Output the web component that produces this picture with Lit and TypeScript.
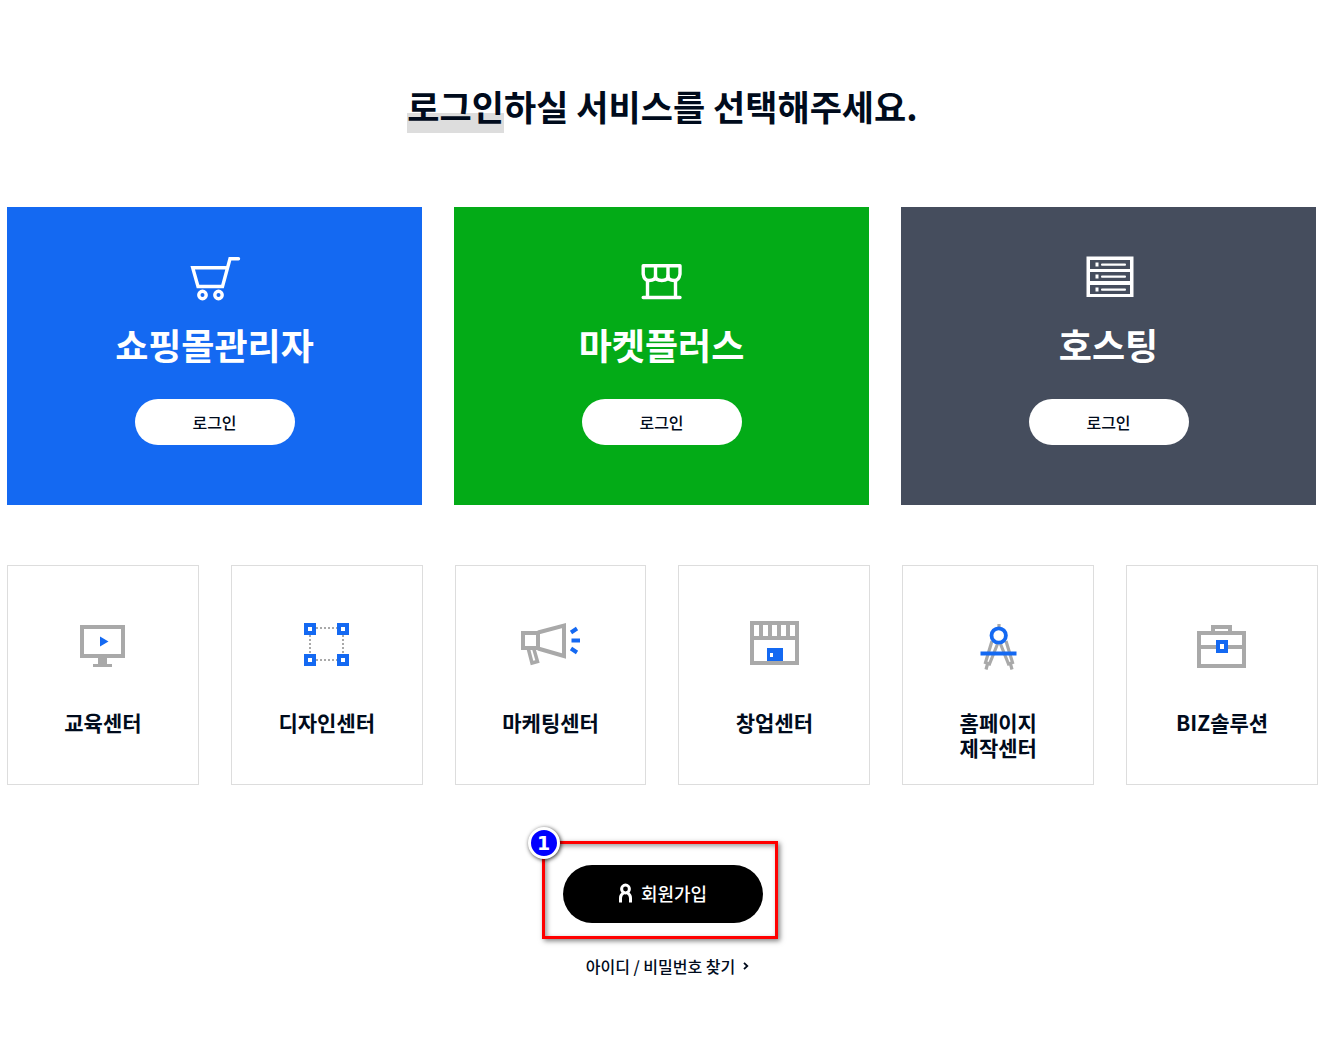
import { LitElement, html, css, svg, type TemplateResult } from "lit";
import { customElement } from "lit/decorators.js";

interface Service {
  name: string;
  tone: string;
  icon: TemplateResult;
}

interface Center {
  lines: string[];
  icon: TemplateResult;
}

const cartIcon = html`<svg class="service-icon" viewBox="-1 0 71 65" aria-hidden="true">
  <g fill="none" stroke="#fff" stroke-width="3.400">
    <path d="M45.500 22.800H12.700L18 41.500H42.500L50 13.700H58.500" stroke-linecap="round" />
    <circle cx="22.500" cy="50" r="3.700" />
    <circle cx="38.500" cy="50" r="3.700" />
  </g>
</svg>`;

const storeIcon = html`<svg class="service-icon" viewBox="-4 -5 71 65" aria-hidden="true">
  <g fill="none" stroke="#fff" stroke-width="3.400" stroke-linecap="round" stroke-linejoin="round">
    <path d="M13.200 15.800H50V24Q49 30.500 44.300 30.500Q38 30.500 38 26Q38 30.500 31.800 30.500Q25.500 30.500 25.500 26Q25.500 30.500 19 30.500Q14 30.500 13.200 24Z" />
    <path d="M25.500 16V26M38 16V26M17.500 31V47M45.500 31V47M13.200 47.500H50" />
  </g>
</svg>`;

const serverIcon = html`<svg class="service-icon" viewBox="-2 0 71 65" aria-hidden="true">
  <rect x="11.500" y="11.500" width="47" height="40.500" fill="#fff" />
  ${[15, 27, 40].map(
    (y) => svg`<g>
      <rect x="15" y=${y} width="40" height="9" fill="#454d5d" />
      <rect x="20.500" y=${y + 2.5} width="3" height="4" fill="#fff" />
      <rect x="26" y=${y + 3.4} width="25" height="2.400" rx="1" fill="#fff" />
    </g>`,
  )}
</svg>`;

const monitorIcon = html`<svg class="center-icon" viewBox="-7 0 80 70" aria-hidden="true">
  <rect x="12" y="17" width="41" height="29" fill="none" stroke="#a9a9a9" stroke-width="4" />
  <path d="M28 48h9v6h5v3H23v-3h5z" fill="#a9a9a9" />
  <path d="M30 26.500V36.500L38.500 31.500Z" fill="#1469f2" />
</svg>`;

const designIcon = html`<svg class="center-icon" viewBox="-3 0 80 70" aria-hidden="true">
  <path d="M26 18H47M26 50H47M20 25V44M53 25V44" fill="none" stroke="#a9a9a9" stroke-width="2" stroke-dasharray="2 2" />
  <g fill="none" stroke="#1469f2" stroke-width="4">
    <rect x="16" y="15" width="8" height="8" />
    <rect x="49" y="15" width="8" height="8" />
    <rect x="16" y="46" width="8" height="8" />
    <rect x="49" y="46" width="8" height="8" />
  </g>
</svg>`;

const megaphoneIcon = html`<svg class="center-icon" viewBox="1 0 80 70" aria-hidden="true">
  <g fill="none" stroke="#a9a9a9" stroke-width="4">
    <rect x="13" y="23" width="15" height="15" />
    <path d="M28 22.500L54 15.500V46L28 38.500" />
    <path d="M18.500 39.500L22 53L27.500 51.500L24 39.500" stroke-width="3.500" />
  </g>
  <path d="M61 22.500L67 18.500M61.500 30.500H70M61 38.500L67 42.500" fill="none" stroke="#1469f2" stroke-width="4" />
</svg>`;

const startupIcon = html`<svg class="center-icon" viewBox="-6 0 80 70" aria-hidden="true">
  <g fill="none" stroke="#a9a9a9" stroke-width="4">
    <rect x="12" y="13" width="45" height="40" />
    <path d="M12 28H57M21 13V28M30 13V28M39 13V28M48 13V28" />
  </g>
  <rect x="27" y="38" width="16" height="13" fill="#1469f2" />
  <rect x="30" y="43" width="3" height="4" fill="#fff" />
</svg>`;

const compassIcon = html`<svg class="center-icon" viewBox="-7 0 80 70" aria-hidden="true">
  <g fill="none" stroke="#a9a9a9" stroke-width="3.200">
    <path d="M34 14V18" />
    <path d="M27 31L20.500 52.500L24.500 54L32.500 34M22.500 54L21 59.500M41 31L47.500 52.500L43.500 54L35.500 34M45.500 54L47 59.500" />
  </g>
  <circle cx="33.700" cy="25.500" r="7.200" fill="#fff" stroke="#1469f2" stroke-width="3.800" />
  <rect x="15.500" y="41.500" width="36" height="4" fill="#1469f2" />
</svg>`;

const briefcaseIcon = html`<svg class="center-icon" viewBox="-3 0 80 70" aria-hidden="true">
  <g fill="none" stroke="#a9a9a9" stroke-width="4">
    <rect x="14" y="23" width="45" height="33" />
    <path d="M28 22V17H45V22M14 37H59" />
  </g>
  <rect x="33" y="32" width="8" height="9" fill="#fff" stroke="#1469f2" stroke-width="4" />
</svg>`;

const services: Service[] = [
  { name: "쇼핑몰관리자", tone: "blue", icon: cartIcon },
  { name: "마켓플러스", tone: "green", icon: storeIcon },
  { name: "호스팅", tone: "slate", icon: serverIcon },
];

const centers: Center[] = [
  { lines: ["교육센터"], icon: monitorIcon },
  { lines: ["디자인센터"], icon: designIcon },
  { lines: ["마케팅센터"], icon: megaphoneIcon },
  { lines: ["창업센터"], icon: startupIcon },
  { lines: ["홈페이지", "제작센터"], icon: compassIcon },
  { lines: ["BIZ솔루션"], icon: briefcaseIcon },
];

@customElement("app-root")
export class AppRoot extends LitElement {
  static styles = css`
    :host {
      display: block;
      background: #fff;
      color: #000b1c;
      font-family: "Noto Sans CJK KR", sans-serif;
    }
    .page {
      display: flex;
      flex-direction: column;
      padding: 79px 7px 60px;
    }
    .title {
      margin: 0;
      text-align: center;
      font-size: 35px;
      line-height: 54px;
      font-weight: 700;
    }
    .mark {
      display: inline-block;
      background: linear-gradient(#ddd, #ddd) 0 100% / 100% 20px no-repeat;
    }
    .services {
      display: grid;
      grid-template-columns: repeat(3, 1fr);
      gap: 32px;
      margin-top: 74px;
      padding-right: 2px;
    }
    .service {
      display: flex;
      flex-direction: column;
      align-items: center;
      padding: 38px 0 60px;
      color: #fff;
    }
    .blue {
      background: #1469f2;
    }
    .green {
      background: #03ab17;
    }
    .slate {
      background: #454d5d;
    }
    .service-icon {
      display: block;
      width: 71px;
      height: 65px;
    }
    .service-name {
      margin: 8px 0 28px;
      font-size: 36px;
      line-height: 53px;
      font-weight: 700;
    }
    .login {
      width: 160px;
      height: 46px;
      padding: 0;
      border: 0;
      border-radius: 23px;
      background: #fff;
      color: #000b1c;
      font-family: inherit;
      font-size: 16px;
      line-height: 24px;
      font-weight: 500;
      cursor: pointer;
    }
    .centers {
      display: grid;
      grid-template-columns: repeat(6, 1fr);
      gap: 32px;
      margin-top: 60px;
    }
    .center {
      box-sizing: border-box;
      display: flex;
      flex-direction: column;
      align-items: center;
      gap: 30px;
      min-height: 220px;
      padding: 44px 0 22px;
      border: 1px solid #ddd;
      color: inherit;
      text-decoration: none;
    }
    .center-icon {
      display: block;
      width: 80px;
      height: 70px;
    }
    .center-name {
      text-align: center;
      font-size: 21px;
      line-height: 25px;
      font-weight: 700;
    }
    .line {
      display: block;
    }
    .join-area {
      position: relative;
      align-self: center;
      margin-top: 80px;
    }
    .join {
      display: flex;
      align-items: center;
      justify-content: center;
      gap: 8px;
      width: 200px;
      height: 58px;
      padding: 0 0 2px;
      border: 0;
      border-radius: 29px;
      background: #000;
      color: #fff;
      font-family: inherit;
      font-size: 18px;
      line-height: 26px;
      font-weight: 500;
      cursor: pointer;
    }
    .join-icon {
      width: 15px;
      height: 20px;
    }
    .callout {
      position: absolute;
      inset: -24px -15px -16px -21px;
      border: 3px solid #f00;
      box-shadow: 2px 2px 5px rgba(0, 0, 0, 0.5), inset 2px 2px 5px rgba(0, 0, 0, 0.4);
      pointer-events: none;
    }
    .badge {
      position: absolute;
      top: -17px;
      left: -17px;
      box-sizing: border-box;
      width: 32px;
      height: 32px;
      border: 3px solid #fff;
      border-radius: 50%;
      background: #00f;
      box-shadow: 1px 1px 4px rgba(0, 0, 0, 0.8);
      color: #fff;
      text-align: center;
      font-family: "DejaVu Sans", sans-serif;
      font-size: 19px;
      line-height: 26px;
      font-weight: 700;
    }
    .find {
      display: flex;
      align-items: center;
      align-self: center;
      gap: 8px;
      margin-top: 31px;
      padding-left: 10px;
      color: inherit;
      font-size: 16px;
      line-height: 24px;
      font-weight: 500;
      text-decoration: none;
    }
    .find-icon {
      width: 6px;
      height: 8px;
    }
  `;

  render() {
    return html`
      <main class="page">
        <h1 class="title"><span class="mark">로그인</span>하실 서비스를 선택해주세요.</h1>
        <section class="services">
          ${services.map(
            (s) => html`<article class="service ${s.tone}">
              ${s.icon}
              <h2 class="service-name">${s.name}</h2>
              <button class="login" type="button">로그인</button>
            </article>`,
          )}
        </section>
        <nav class="centers">
          ${centers.map(
            (c) => html`<a class="center" href="#">
              ${c.icon}
              <span class="center-name">${c.lines.map((l) => html`<span class="line">${l}</span>`)}</span>
            </a>`,
          )}
        </nav>
        <div class="join-area">
          <button class="join" type="button">
            <svg class="join-icon" viewBox="-1 -1 15 20" aria-hidden="true">
              <g fill="none" stroke="#fff" stroke-width="3">
                <circle cx="6.500" cy="5" r="3.900" />
                <path d="M1.500 18.500V14Q1.500 11 4.500 8.800M11.500 18.500V14Q11.500 11 8.500 8.800" />
              </g>
            </svg>
            <span>회원가입</span>
          </button>
          <div class="callout"><span class="badge">1</span></div>
        </div>
        <a class="find" href="#">
          <span>아이디 / 비밀번호 찾기</span>
          <svg class="find-icon" viewBox="0 0 6 8" aria-hidden="true">
            <path d="M1 0.800L4.300 4L1 7.200" fill="none" stroke="#000b1c" stroke-width="1.800" />
          </svg>
        </a>
      </main>
    `;
  }
}
